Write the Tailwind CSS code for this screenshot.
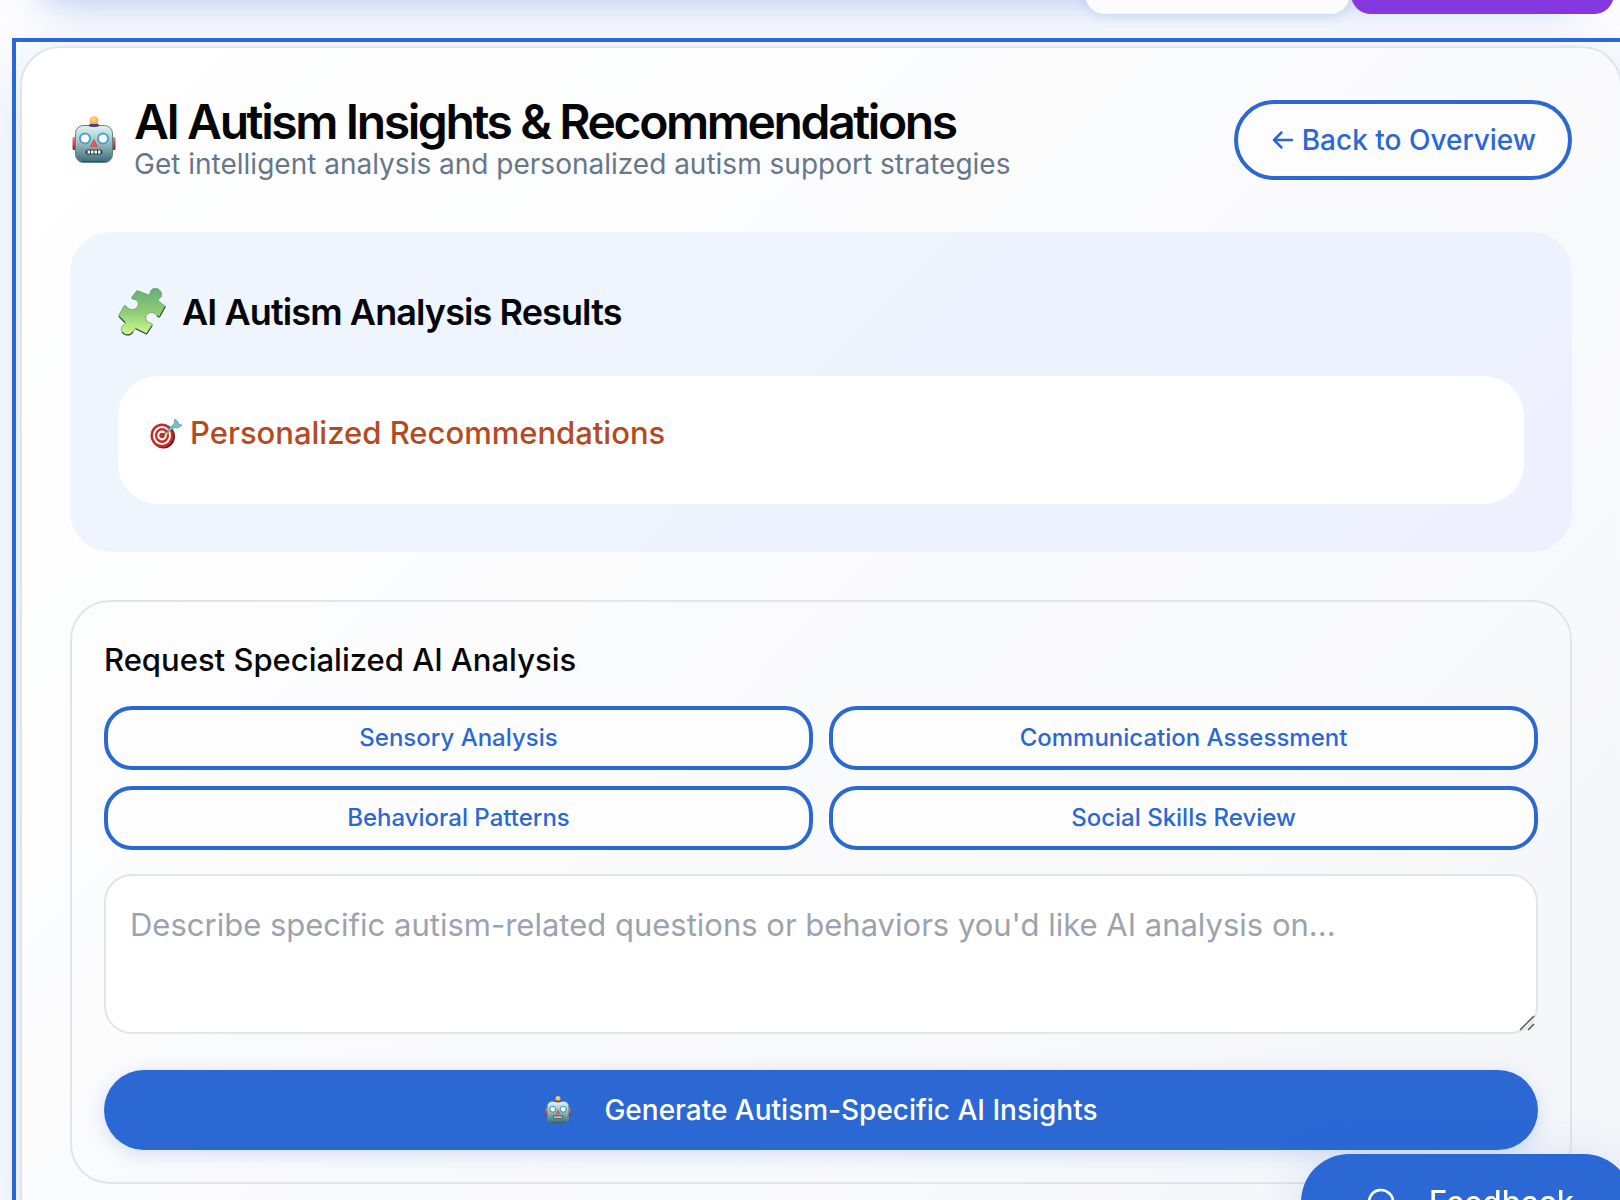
<!DOCTYPE html>
<html lang="en">
<head>
<meta charset="utf-8">
<meta name="viewport" content="width=device-width, initial-scale=1">
<title>AI Autism Insights</title>
<script src="https://cdn.jsdelivr.net/npm/@tailwindcss/browser@4"></script>
</head>
<body class="h-screen overflow-hidden bg-[#fdfdfe] font-[Inter,'Liberation_Sans',sans-serif] text-[#050608]">
<svg class="absolute size-0" aria-hidden="true">
  <defs>
    <linearGradient id="face" x1="0" y1="0" x2="0" y2="1"><stop offset="0" stop-color="#e2f5f3"/><stop offset=".45" stop-color="#9fc0c5"/><stop offset=".95" stop-color="#417480"/><stop offset="1" stop-color="#15343f"/></linearGradient>
    <linearGradient id="ear" x1="0" y1="0" x2="0" y2="1"><stop offset="0" stop-color="#f0837c"/><stop offset="1" stop-color="#8e1d1b"/></linearGradient>
    <linearGradient id="leaf" x1="0" y1="0" x2="0" y2="1"><stop offset="0" stop-color="#62b077"/><stop offset=".5" stop-color="#8fcb75"/><stop offset="1" stop-color="#ccfb8b"/></linearGradient>
    <radialGradient id="bulb" cx=".45" cy=".35" r=".7"><stop offset="0" stop-color="#ffe38a"/><stop offset="1" stop-color="#f0981f"/></radialGradient>
    <symbol id="robot" viewBox="0 0 48 48">
      <rect x="2.500" y="21" width="5" height="13" rx="1.500" fill="url(#ear)"/>
      <rect x="40.500" y="21" width="5" height="13" rx="1.500" fill="url(#ear)"/>
      <circle cx="24" cy="4.500" r="4.300" fill="url(#bulb)"/>
      <rect x="5.500" y="9.500" width="37" height="37" rx="8" fill="url(#face)" stroke="#5d8588" stroke-width="1"/>
      <path d="M18.500 9.500c1 2 10 2 11 0l-2-2c-1 .8-6 .8-7 0z" fill="#54407c"/>
      <circle cx="15" cy="22.500" r="5" fill="#fff" stroke="#48a2c9" stroke-width="2"/>
      <circle cx="33" cy="22.500" r="5" fill="#fff" stroke="#48a2c9" stroke-width="2"/>
      <path d="M24 23.500l3.500 7h-7z" fill="#e25b50" stroke="#b94742" stroke-width=".6"/>
      <rect x="15.500" y="33.500" width="17" height="5" rx="2.500" fill="#2f3c3e"/>
      <path d="M17.500 34.500h2.500v3h-2.500zM21 34.500h2.500v3h-2.500zM24.500 34.500h2.500v3h-2.500zM28 34.500h2.500v3h-2.500z" fill="#fff"/>
    </symbol>
  </defs>
</svg>

<div class="absolute inset-x-[30px] -top-20 h-20 rounded-[40px] shadow-[0_4px_36px_rgba(44,104,214,0.34)]"></div>

<nav class="relative flex h-[14px] items-end justify-end gap-px pr-[6px]" aria-label="Views">
  <button type="button" aria-label="Overview" class="h-16 w-[265px] shrink-0 rounded-[20px] bg-[#fdfdfd] shadow-[0_2px_12px_rgba(44,104,214,0.16)]"></button>
  <button type="button" aria-label="AI insights" class="h-16 w-[263px] shrink-0 rounded-[20px] bg-[#8638e0]"></button>
</nav>

<main class="relative mt-8 -mr-[2px] ml-5 rounded-[40px] border-2 border-[#e1e5ea] bg-linear-135 from-white to-[#f5f6f9] p-12 shadow-[0_16px_64px_rgba(44,104,214,0.2)]">
  <div class="pointer-events-none absolute -inset-[10px] border-4 border-[#2b68d4]"></div>

  <header class="flex h-[88px] items-center justify-between">
    <div class="flex items-center gap-4">
      <svg class="size-12 shrink-0" aria-hidden="true"><use href="#robot"/></svg>
      <div>
        <h1 class="text-[48px] leading-[48px] font-semibold tracking-tighter">AI Autism Insights &amp; Recommendations</h1>
        <p class="text-[28px] leading-9 text-[#67778a]">Get intelligent analysis and personalized autism support strategies</p>
      </div>
    </div>
    <button type="button" class="flex h-20 shrink-0 items-center gap-2 rounded-[40px] border-4 border-[#2b68d4] bg-[#fdfdfd] px-8 text-[28px] font-medium text-[#2b68d4]">
      <svg class="size-6" viewBox="0 0 24 24" fill="none" stroke="currentColor" stroke-width="2.500" stroke-linecap="round" stroke-linejoin="round" aria-hidden="true"><path d="M22 12H4M11.500 4.500L4 12l7.500 7.500"/></svg>
      Back to Overview
    </button>
  </header>

  <section class="mt-12 rounded-[40px] bg-linear-135 from-[#eff6ff] to-[#eef0fe] p-12">
    <div class="flex h-16 items-center gap-4">
      <svg class="size-12 shrink-0" viewBox="0 0 48 48" aria-hidden="true">
        <path d="M19 2.500L29.500 6.500C31.500 7.500 32 5.500 32.500 3.500C34 0 38 -.5 41 1.500C44 4 44.500 8 42 10C40.500 11.500 39.500 12.500 41 13.500L47.500 18.500L42 28.500C41 30 39.500 28.500 38.500 27C36 24 31.500 23.500 29 26.500C26.500 29.500 28 33.500 31 34.500C33 35.200 35 35.500 34 37.500L28.500 46L18.500 40.500C16.500 39.500 16.500 41.500 15.500 43.500C13.500 47.500 9 48 6 46C3 44 2.500 39.500 5 37.500C7 36 8 35.500 6.500 34L.5 28L6 18C7.500 16.500 8.500 18.500 10 20C13 22.500 17.500 22 19.500 18.500C21.500 15 19.500 12 16.500 11.500C14 11 13 10.500 14 9Z" fill="url(#leaf)" stroke="#6d9a62" stroke-width=".8"/>
        <path d="M1 28.500l6 6M17.500 40.800L28.500 46l5.800-8.500M39 27.500c1 1.500 2 2 3 .5l5.300-9.500M4 44c3 4 9 4 11-.5" fill="none" stroke="#41523a" stroke-width="1.200"/>
      </svg>
      <h2 class="text-[36px] leading-[44px] font-semibold tracking-tight">AI Autism Analysis Results</h2>
    </div>
    <div class="mt-8 flex h-32 items-start rounded-[40px] bg-white p-8">
      <h3 class="flex items-center gap-2 text-[31px] leading-[50px] font-medium text-[#b54a22]">
        <svg class="size-8 shrink-0" viewBox="0 0 32 32" aria-hidden="true">
          <ellipse cx="13.500" cy="19.500" rx="11.500" ry="12" fill="#6d1816"/>
          <ellipse cx="12" cy="18.500" rx="11.500" ry="12" fill="#c42b26"/>
          <ellipse cx="12" cy="18.500" rx="9" ry="9.500" fill="#fff"/>
          <ellipse cx="12" cy="18.500" rx="7" ry="7.500" fill="#c42b26"/>
          <ellipse cx="12" cy="18.500" rx="4.700" ry="5" fill="#fff"/>
          <circle cx="12" cy="18.500" r="2.700" fill="#c42b26"/>
          <path d="M13 18l9-8" stroke="#3c4c52" stroke-width="1.200"/>
          <path d="M16 14.500l3 2-2 1.500-2-1z" fill="#f2b632"/>
          <path d="M17 13.500L24 7l1-5 3 3 .5 2.500L32 8l-4 3-4-.5-6 5z" fill="#71c3cf" stroke="#3f7f8b" stroke-width=".6"/>
        </svg>
        Personalized Recommendations
      </h3>
    </div>
  </section>

  <section class="mt-12 rounded-[40px] border-2 border-[#e1e5ea] p-8">
    <h3 class="text-[31px] leading-[52px] font-medium">Request Specialized AI Analysis</h3>
    <div class="mt-5 grid grid-cols-2 gap-4">
      <button type="button" class="h-16 rounded-[28px] border-4 border-[#2b68d4] bg-[#fdfdfd] text-[24px] font-medium text-[#2b68d4]">Sensory Analysis</button>
      <button type="button" class="h-16 rounded-[28px] border-4 border-[#2b68d4] bg-[#fdfdfd] text-[24px] font-medium text-[#2b68d4]">Communication Assessment</button>
      <button type="button" class="h-16 rounded-[28px] border-4 border-[#2b68d4] bg-[#fdfdfd] text-[24px] font-medium text-[#2b68d4]">Behavioral Patterns</button>
      <button type="button" class="h-16 rounded-[28px] border-4 border-[#2b68d4] bg-[#fdfdfd] text-[24px] font-medium text-[#2b68d4]">Social Skills Review</button>
    </div>
    <div class="relative mt-6">
      <textarea aria-label="Questions for AI analysis" placeholder="Describe specific autism-related questions or behaviors you'd like AI analysis on..." class="block h-40 w-full resize-none rounded-[28px] border-2 border-[#e1e5ea] bg-white px-6 py-6 text-[31px] leading-[50px] placeholder:text-[#9ca3af]"></textarea>
      <svg class="absolute right-[3px] bottom-[3px] size-4" viewBox="0 0 16 16" fill="none" stroke="#555" stroke-width="1.500" aria-hidden="true"><path d="M1 15L15 1M9 15l6-6"/></svg>
    </div>
    <button type="button" class="mt-9 flex h-20 w-full items-center justify-center gap-8 rounded-[40px] bg-[#2b68d4] text-[28px] font-medium text-white shadow-[0_4px_20px_rgba(44,104,214,0.2)]">
      <svg class="size-7" aria-hidden="true"><use href="#robot"/></svg>
      Generate Autism-Specific AI Insights
    </button>
  </section>
</main>

<button type="button" class="fixed -right-[12px] -bottom-[50px] flex h-24 w-[331px] items-center gap-8 rounded-[48px] bg-[#2b68d4] pl-16 text-[31px] font-medium text-white shadow-[0_8px_48px_rgba(44,104,214,0.2)]">
  <svg class="size-8" viewBox="0 0 24 24" fill="none" stroke="currentColor" stroke-width="2" stroke-linecap="round" stroke-linejoin="round" aria-hidden="true"><path d="M7.900 20A9 9 0 1 0 4 16.100L2 22Z"/></svg>
  Feedback
</button>
</body>
</html>
